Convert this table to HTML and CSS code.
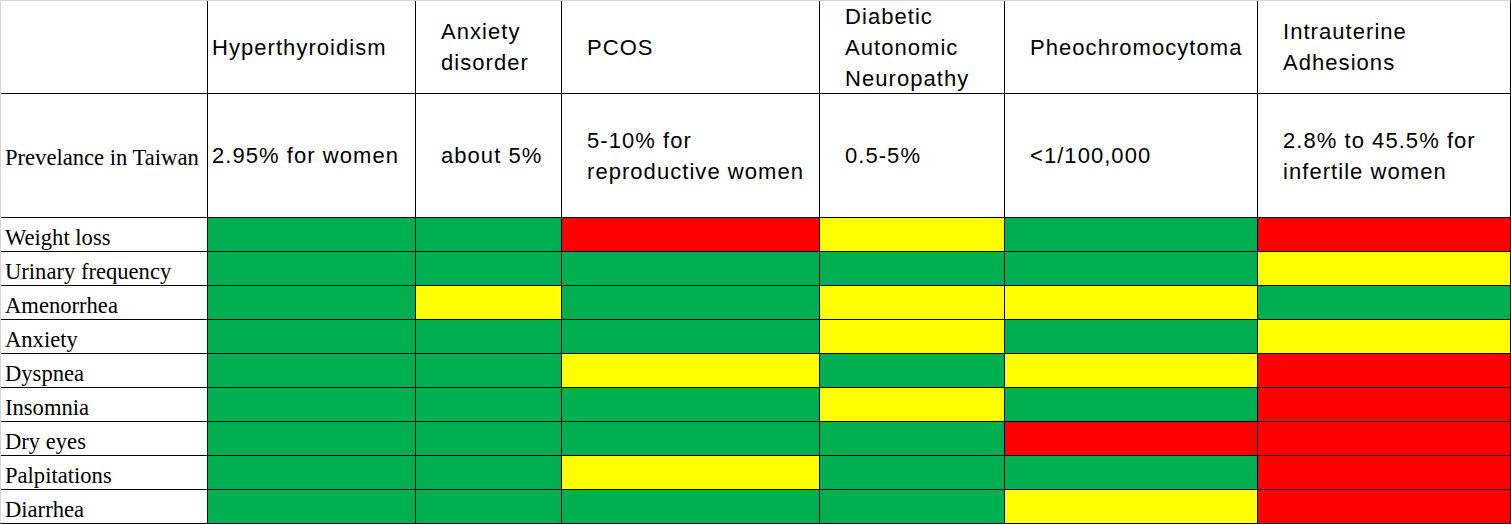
FILE: index.html
```html
<!DOCTYPE html>
<html lang="en">
<head>
<meta charset="utf-8">
<title>Symptom comparison</title>
<link rel="stylesheet" href="styles.css">
</head>
<body>
<div class="sheet">
  <div class="cell label"></div>
  <div class="cell head c1">Hyperthyroidism</div>
  <div class="cell head">Anxiety<br>disorder</div>
  <div class="cell head">PCOS</div>
  <div class="cell head">Diabetic<br>Autonomic<br>Neuropathy</div>
  <div class="cell head">Pheochromocytoma</div>
  <div class="cell head">Intrauterine<br>Adhesions</div>

  <div class="cell label prev">Prevelance in Taiwan</div>
  <div class="cell head c1">2.95% for women</div>
  <div class="cell head">about 5%</div>
  <div class="cell head">5-10% for<br>reproductive women</div>
  <div class="cell head">0.5-5%</div>
  <div class="cell head">&lt;1/100,000</div>
  <div class="cell head">2.8% to 45.5% for<br>infertile women</div>

  <div class="cell label">Weight loss</div>
  <div class="cell g"></div><div class="cell g"></div><div class="cell r"></div><div class="cell y"></div><div class="cell g"></div><div class="cell r"></div>

  <div class="cell label">Urinary frequency</div>
  <div class="cell g"></div><div class="cell g"></div><div class="cell g"></div><div class="cell g"></div><div class="cell g"></div><div class="cell y"></div>

  <div class="cell label">Amenorrhea</div>
  <div class="cell g"></div><div class="cell y"></div><div class="cell g"></div><div class="cell y"></div><div class="cell y"></div><div class="cell g"></div>

  <div class="cell label">Anxiety</div>
  <div class="cell g"></div><div class="cell g"></div><div class="cell g"></div><div class="cell y"></div><div class="cell g"></div><div class="cell y"></div>

  <div class="cell label">Dyspnea</div>
  <div class="cell g"></div><div class="cell g"></div><div class="cell y"></div><div class="cell g"></div><div class="cell y"></div><div class="cell r"></div>

  <div class="cell label">Insomnia</div>
  <div class="cell g"></div><div class="cell g"></div><div class="cell g"></div><div class="cell y"></div><div class="cell g"></div><div class="cell r"></div>

  <div class="cell label">Dry eyes</div>
  <div class="cell g"></div><div class="cell g"></div><div class="cell g"></div><div class="cell g"></div><div class="cell r"></div><div class="cell r"></div>

  <div class="cell label">Palpitations</div>
  <div class="cell g"></div><div class="cell g"></div><div class="cell y"></div><div class="cell g"></div><div class="cell g"></div><div class="cell r"></div>

  <div class="cell label">Diarrhea</div>
  <div class="cell g"></div><div class="cell g"></div><div class="cell g"></div><div class="cell g"></div><div class="cell y"></div><div class="cell r"></div>
</div>
</body>
</html>
```

FILE: styles.css
```css
html, body {
  margin: 0;
  padding: 0;
  background: #ffffff;
}

.sheet {
  display: grid;
  grid-template-columns: 206px 207px 145px 257px 184px 252px 252px;
  grid-template-rows: 92px 123px repeat(9, 33px);
  gap: 1px;
  background: #000000;
  border-top: 1px solid #d4d4d4;
  border-left: 1px solid #d4d4d4;
  border-right: 1px solid #000000;
  border-bottom: 1px solid #000000;
  width: 1509px;
  height: 522px;
}

.cell {
  background: #ffffff;
  color: #000000;
  min-width: 0;
}

.label {
  font-family: "Liberation Serif", "Times New Roman", serif;
  font-size: 22.6px;
  line-height: 24px;
  padding-left: 4px;
  padding-bottom: 1px;
  display: flex;
  align-items: flex-end;
  white-space: nowrap;
}

.label.prev {
  align-items: center;
  padding-top: 4px;
  padding-bottom: 0;
}

.head {
  font-family: "Liberation Sans", Arial, sans-serif;
  font-size: 22px;
  letter-spacing: 1.05px;
  line-height: 31px;
  padding-left: 25px;
  display: flex;
  align-items: center;
  white-space: nowrap;
}

.head.c1 {
  padding-left: 4px;
}

.g { background: #00b050; }
.r { background: #ff0000; }
.y { background: #ffff00; }
```
